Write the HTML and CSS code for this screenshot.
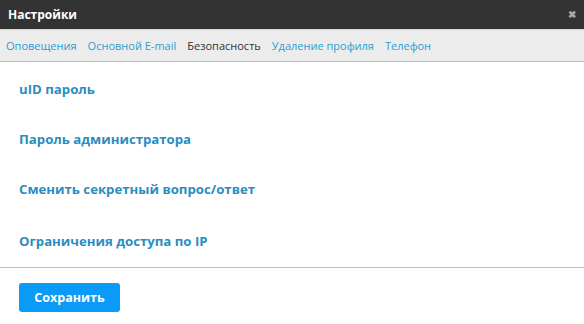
FILE: index.html
```html
<!DOCTYPE html>
<html lang="ru">
<head>
    <meta charset="UTF-8">
    <title>Настройки</title>
    <link rel="stylesheet" href="styles.css">
</head>
<body>
    <div class="dialog">
        <div class="dialog__header">
            <span class="dialog__title">Настройки</span>
            <span class="dialog__close">&#10006;</span>
        </div>

        <div class="tabs">
            <a class="tabs__item" href="#">Оповещения</a>
            <a class="tabs__item" href="#">Основной E-mail</a>
            <a class="tabs__item tabs__item--active" href="#">Безопасность</a>
            <a class="tabs__item" href="#">Удаление профиля</a>
            <a class="tabs__item" href="#">Телефон</a>
        </div>

        <div class="dialog__body">
            <a class="section-link" href="#">uID пароль</a>
            <a class="section-link" href="#">Пароль администратора</a>
            <a class="section-link" href="#">Сменить секретный вопрос/ответ</a>
            <a class="section-link" href="#">Ограничения доступа по IP</a>
        </div>

        <div class="dialog__footer">
            <button type="button" class="btn-save">Сохранить</button>
        </div>
    </div>
</body>
</html>
```

FILE: styles.css
```css
* {
    margin: 0;
    padding: 0;
    box-sizing: border-box;
}

body {
    font-family: "Open Sans", sans-serif;
    background: #fff;
    width: 584px;
}

.dialog {
    display: flex;
    flex-direction: column;
}

.dialog__header {
    height: 30px;
    background: #333;
    display: flex;
    align-items: center;
    justify-content: space-between;
    padding: 0 8px 1px 8px;
    border-bottom: 1px solid #d6d6d6;
}

.dialog__title {
    color: #fff;
    font-weight: 700;
    font-size: 12px;
}

.dialog__close {
    color: #aaa;
    font-size: 10px;
    font-weight: 700;
}

.tabs {
    height: 32px;
    background: #ececec;
    border-bottom: 1px solid #bdbdbd;
    display: flex;
    align-items: center;
    gap: 11px;
    padding: 0 6px;
}

.tabs__item {
    font-size: 11px;
    color: #2a9fd0;
    text-decoration: none;
}

.tabs__item--active {
    color: #333;
}

.dialog__body {
    display: flex;
    flex-direction: column;
    padding: 17px 19px 16px;
    gap: 30px;
    border-bottom: 1px solid #c4bcc0;
}

.section-link {
    font-size: 13.2px;
    font-weight: 700;
    color: #2a8dbf;
    text-decoration: none;
    line-height: 20px;
}

.section-link:last-child {
    margin-top: 2px;
}

.dialog__footer {
    padding: 15px 19px;
}

.btn-save {
    width: 101px;
    height: 29px;
    border: none;
    border-radius: 3px;
    background: #0a9af7;
    color: #fff;
    font-family: "Open Sans", sans-serif;
    font-weight: 700;
    font-size: 12.5px;
}
```
